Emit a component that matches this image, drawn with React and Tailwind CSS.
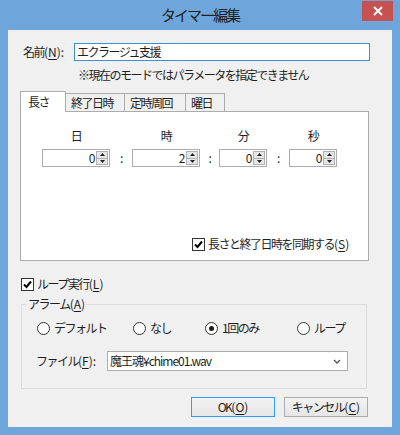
import React from "react";

// access-key suffix like (N), drawn without the tight CJK tracking
const Key = ({ k }) => (
  <span className="tracking-[0px]">
    (<span className="underline underline-offset-[2px]">{k}</span>)
  </span>
);

const CheckBox = ({ checked }) => (
  <span className="w-[13px] h-[13px] border border-[#333333] bg-white flex items-center justify-center shrink-0">
    {checked && (
      <svg width="9" height="9" viewBox="0 0 9 9">
        <path d="M1 4.5 L3.5 7 L8 1.5" stroke="#000" strokeWidth="2" fill="none" />
      </svg>
    )}
  </span>
);

const Radio = ({ checked }) => (
  <span className="w-[13px] h-[13px] rounded-full border border-[#333333] bg-white flex items-center justify-center shrink-0">
    {checked && <span className="w-[5px] h-[5px] rounded-full bg-[#1e1e1e]" />}
  </span>
);

const Spin = ({ value, w }) => (
  <div className={`flex h-[18px] border border-[#acacac] bg-white ${w}`}>
    <span className="flex-1 text-right pr-[2px] leading-[16px]">{value}</span>
    <div className="w-[12px] flex flex-col my-[1px] mr-[1px]">
      <span className="flex-1 bg-[#e6e6e6] border border-[#b0b0b0] flex items-center justify-center">
        <svg width="5" height="3" viewBox="0 0 5 3">
          <path d="M0 3 L2.5 0 L5 3Z" fill="#222" />
        </svg>
      </span>
      <span className="flex-1 bg-[#e6e6e6] border border-t-0 border-[#b0b0b0] flex items-center justify-center">
        <svg width="5" height="3" viewBox="0 0 5 3">
          <path d="M0 0 L2.5 3 L5 0Z" fill="#222" />
        </svg>
      </span>
    </div>
  </div>
);

const Column = ({ label, value, w }) => (
  <div className="flex flex-col items-center">
    <span className="h-[14px] leading-[14px] mb-[6px]">{label}</span>
    <Spin value={value} w={w} />
  </div>
);

const Colon = ({ w }) => (
  <div className={`flex flex-col items-center ${w}`}>
    <span className="h-[14px] mb-[6px]" />
    <span className="leading-[18px]">:</span>
  </div>
);

const App = () => {
  const tabs = [
    { label: "終了日時", w: "w-[60px]" },
    { label: "定時周回", w: "w-[62px]" },
    { label: "曜日", w: "w-[40px]" },
  ];
  const radios = [
    { label: "デフォルト", w: "w-[96px]" },
    { label: "なし", w: "w-[72px]" },
    { label: "1回のみ", w: "w-[92px]", checked: true },
    { label: "ループ", w: "w-[60px]" },
  ];

  return (
    <div className="w-[400px] h-[435px] bg-[#6ea6dc] flex flex-col font-['Noto_Sans_CJK_JP','Noto_Sans',sans-serif] text-[12px] text-[#1e1e1e] tracking-[-1.5px]">
      {/* title bar */}
      <div className="relative h-[30px] flex items-center justify-center">
        <span className="text-[15px] tracking-[-2px] text-[#222]">タイマー編集</span>
        <div className="absolute right-[7px] top-[1px] w-[31px] h-[20px] bg-[#c75050] flex items-center justify-center">
          <svg width="10" height="10" viewBox="0 0 10 10">
            <path d="M1 1 L9 9 M9 1 L1 9" stroke="#fff" strokeWidth="2" />
          </svg>
        </div>
      </div>

      {/* body */}
      <div className="flex-1 mx-[8px] mb-[8px] bg-[#f0f0f0] flex flex-col">
        <div className="flex items-center mt-[13px] pl-[15px]">
          <span className="w-[51px]">
            名前<Key k="N" />:
          </span>
          <div className="w-[296px] h-[18px] border border-[#3c8de0] bg-white px-[2px] leading-[16px]">
            エクラージュ支援
          </div>
        </div>
        <div className="mt-[7px] pl-[70px] h-[14px] leading-[14px]">
          ※現在のモードではパラメータを指定できません
        </div>

        {/* tabs */}
        <div className="mt-[8px] ml-[12px] w-[349px]">
          <div className="flex items-end h-[21px]">
            <div className="relative z-10 h-[21px] w-[46px] -mb-px bg-white border border-b-0 border-[#acacac] pl-[7px] leading-[20px]">
              長さ
            </div>
            {tabs.map((t) => (
              <div
                key={t.label}
                className={`h-[18px] -ml-px pl-[5px] bg-[#f0f0f0] border border-b-0 border-[#acacac] leading-[17px] ${t.w}`}
              >
                {t.label}
              </div>
            ))}
          </div>
          <div className="h-[150px] bg-white border border-[#acacac] flex flex-col pt-[17px]">
            <div className="flex pl-[21px]">
              <Column label="日" value="0" w="w-[68px]" />
              <Colon w="w-[22px]" />
              <Column label="時" value="2" w="w-[68px]" />
              <Colon w="w-[19px]" />
              <Column label="分" value="0" w="w-[48px]" />
              <Colon w="w-[22px]" />
              <Column label="秒" value="0" w="w-[48px]" />
            </div>
            <div className="mt-[70px] pl-[171px] flex items-center gap-[3px]">
              <CheckBox checked />
              <span className="leading-[14px]">
                長さと終了日時を同期する<Key k="S" />
              </span>
            </div>
          </div>
        </div>

        {/* loop */}
        <div className="mt-[16px] ml-[13px] flex items-center gap-[3px]">
          <CheckBox checked />
          <span className="leading-[14px]">
            ループ実行<Key k="L" />
          </span>
        </div>

        {/* alarm group */}
        <fieldset className="mt-[6px] ml-[13px] w-[346px] h-[92px] border border-[#dcdcdc]">
          <legend className="ml-[5px] px-[1px] leading-[14px]">
            アラーム<Key k="A" />
          </legend>
          <div className="flex items-center mt-[10px] pl-[15px]">
            {radios.map((r) => (
              <div key={r.label} className={`flex items-center gap-[4px] ${r.w}`}>
                <Radio checked={r.checked} />
                <span className="leading-[14px]">{r.label}</span>
              </div>
            ))}
          </div>
          <div className="flex items-center mt-[16px] pl-[14px]">
            <span className="w-[71px]">
              ファイル<Key k="F" />:
            </span>
            <div className="w-[241px] h-[20px] border border-[#acacac] bg-white flex items-center pl-[2px] pr-[6px]">
              <span className="flex-1 tracking-[-1px]">魔王魂¥chime01.wav</span>
              <svg width="8" height="5" viewBox="0 0 8 5">
                <path d="M1 1 L4 4 L7 1" stroke="#555" strokeWidth="1.4" fill="none" />
              </svg>
            </div>
          </div>
        </fieldset>

        {/* buttons */}
        <div className="flex justify-end gap-[9px] pr-[24px] mt-[8px]">
          <div className="w-[84px] h-[20px] border border-[#3399ff] bg-gradient-to-b from-[#f2f2f2] to-[#e6e6e6] flex items-center justify-center">
            OK<Key k="O" />
          </div>
          <div className="w-[84px] h-[20px] border border-[#acacac] bg-gradient-to-b from-[#f2f2f2] to-[#e6e6e6] flex items-center justify-center">
            キャンセル<Key k="C" />
          </div>
        </div>
      </div>
    </div>
  );
};

export default App;
